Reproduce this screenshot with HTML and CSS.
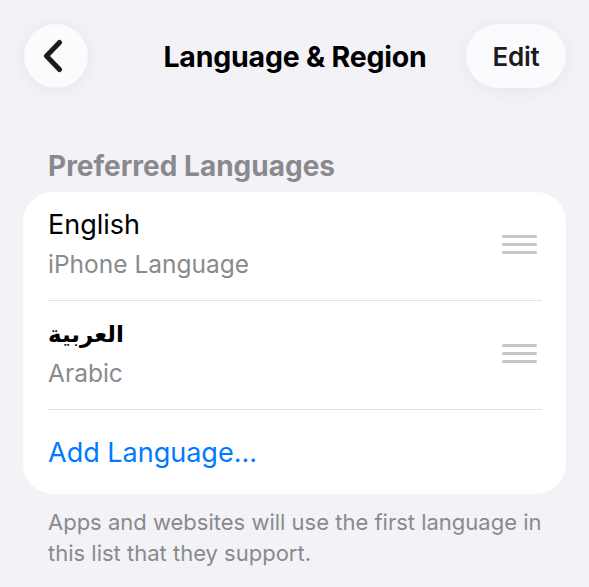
FILE: index.html
```html
<!DOCTYPE html>
<html lang="en">
<head>
    <meta charset="UTF-8">
    <meta name="viewport" content="width=device-width, initial-scale=1.0">
    <title>Language &amp; Region</title>
    <link rel="stylesheet" href="styles.css">
</head>
<body>
    <div class="nav">
        <button class="nav-btn back" aria-label="Back">
            <svg width="20" height="34" viewBox="0 0 20 34">
                <path d="M16.5 3.5 L3.5 17 L16.5 30.5" fill="none" stroke="#1c1c1e" stroke-width="5" stroke-linecap="round" stroke-linejoin="round"/>
            </svg>
        </button>
        <h1 class="title">Language &amp; Region</h1>
        <button class="nav-btn edit">Edit</button>
    </div>

    <h2 class="section-header">Preferred Languages</h2>
    <div class="card">
        <div class="row">
            <div class="row-inner">
                <div class="lang">
                    <div class="lang-name">English</div>
                    <div class="lang-sub">iPhone Language</div>
                </div>
                <span class="drag"><i></i><i></i><i></i></span>
            </div>
        </div>
        <div class="row">
            <div class="row-inner">
                <div class="lang">
                    <div class="lang-name arabic" lang="ar" dir="rtl">العربية</div>
                    <div class="lang-sub">Arabic</div>
                </div>
                <span class="drag"><i></i><i></i><i></i></span>
            </div>
        </div>
        <div class="row add">
            <div class="row-inner">
                <span class="add-link">Add Language...</span>
            </div>
        </div>
    </div>
    <p class="footer">Apps and websites will use the first language in this list that they support.</p>
</body>
</html>
```

FILE: styles.css
```css
body {
    margin: 0;
    background-color: #f2f2f7;
    font-family: "Inter", "DejaVu Sans", sans-serif;
    color: #000;
}
.nav {
    display: grid;
    grid-template-columns: 1fr auto 1fr;
    align-items: center;
    padding: 24px 23px 0 24px;
    height: 64px;
}
.nav-btn {
    height: 64px;
    border: none;
    border-radius: 32px;
    background-color: #fbfbfd;
    box-shadow: 0 2px 18px rgba(0,0,0,0.06);
    font-family: inherit;
    cursor: pointer;
    display: flex;
    align-items: center;
    justify-content: center;
    padding: 0;
}
.back {
    width: 64px;
    justify-self: start;
}
.back svg {
    margin-right: 6px;
}
.edit {
    width: 100px;
    justify-self: end;
    font-size: 26px;
    font-weight: 600;
    color: #1c1c1e;
    letter-spacing: -0.2px;
}
.title {
    margin: 0;
    font-size: 28.5px;
    font-weight: 700;
    color: #000;
    letter-spacing: -0.2px;
}
.section-header {
    margin: 62px 48px 10px;
    font-size: 28px;
    line-height: 32px;
    font-weight: 700;
    color: #8a8a8e;
    letter-spacing: 0;
}
.card {
    margin: 0 23px;
    background-color: #fff;
    border-radius: 30px;
    overflow: hidden;
}
.row {
    padding-left: 25px;
}
.row-inner {
    display: flex;
    align-items: center;
    justify-content: space-between;
    margin-right: 24px;
    padding: 16px 0 20px;
    border-bottom: 1px solid #e3e3e6;
}
.lang-name {
    font-size: 27px;
    line-height: 34px;
    height: 34px;
    text-align: left;
}
.lang-name.arabic {
    font-family: "DejaVu Sans", sans-serif;
    font-size: 23px;
    font-weight: 700;
    direction: rtl;
}
.lang-sub {
    margin-top: 6px;
    font-size: 24.5px;
    line-height: 32px;
    color: #8a8a8e;
}
.drag {
    display: flex;
    flex-direction: column;
    gap: 5px;
    margin-right: 5px;
}
.drag i {
    display: block;
    width: 35px;
    height: 3px;
    border-radius: 2px;
    background-color: #c6c6c8;
}
.row.add .row-inner {
    border-bottom: none;
    height: 84px;
    padding: 0;
}
.add-link {
    font-size: 27px;
    color: #007aff;
}
.footer {
    margin: 13px 34px 0 48px;
    font-size: 22px;
    line-height: 31px;
    color: #8a8a8e;
}
```
